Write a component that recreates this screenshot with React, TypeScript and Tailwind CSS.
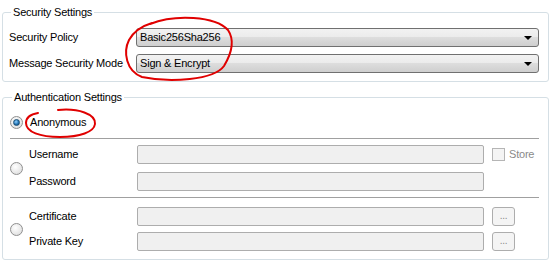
import React from "react";

const font = { fontFamily: '"Liberation Sans", Arial, sans-serif' };

function Combo({ value }: { value: string }) {
  return (
    <div className="relative flex h-[19px] w-[403px] items-center rounded-[3px] border border-[#707070] bg-[linear-gradient(to_bottom,#f2f2f2_0%,#ebebeb_50%,#dddddd_50%,#cfcfcf_100%)] pl-[3px] text-[11px] text-black">
      <span>{value}</span>
      <span className="ml-auto mr-[6px] h-0 w-0 border-x-[4px] border-t-[4px] border-x-transparent border-t-black" />
    </div>
  );
}

function Field() {
  return <div className="h-[19px] w-[347px] rounded-[2px] border border-[#adadad] bg-[#f0f0f0]" />;
}

function Radio({ checked }: { checked?: boolean }) {
  return (
    <span className="flex h-[13px] w-[13px] items-center justify-center rounded-full border border-[#8f8f8f] bg-[radial-gradient(circle_at_40%_35%,#ffffff,#d8d8d8)]">
      {checked && (
        <span className="h-[7px] w-[7px] rounded-full border border-[#1b4e73] bg-[radial-gradient(circle_at_40%_35%,#8fd0ff,#1e6fb0_60%,#12406b)]" />
      )}
    </span>
  );
}

function Dots() {
  return (
    <div className="flex h-[19px] w-[23px] items-center justify-center rounded-[3px] border border-[#adadad] bg-[#f4f4f4] pb-[2px] text-[10px] leading-none text-[#8a8a8a]">
      ...
    </div>
  );
}

export default function App() {
  return (
    <div className="relative h-[267px] w-[553px] overflow-hidden bg-white pt-[5px] tracking-[-0.2px] text-black" style={font}>
      {/* Security Settings */}
      <fieldset className="ml-[2px] w-[547px] rounded-[3px] border border-[#d5dfe5] pb-[8px] pl-[6px]">
        <legend className="ml-[2px] px-[2px] text-[11px] leading-[14px]">Security Settings</legend>
        <div className="mt-[9px] flex flex-col gap-[7px]">
          <div className="flex items-center">
            <span className="w-[127px] text-[11px]">Security Policy</span>
            <Combo value="Basic256Sha256" />
          </div>
          <div className="flex items-center">
            <span className="w-[127px] text-[11px]">Message Security Mode</span>
            <Combo value="Sign & Encrypt" />
          </div>
        </div>
      </fieldset>

      {/* Authentication Settings */}
      <fieldset className="ml-[2px] mt-[8px] w-[547px] rounded-[3px] border border-[#d5dfe5] pb-[8px] pl-[7px] text-[11px]">
        <legend className="ml-[2px] px-[2px] text-[11px] leading-[14px]">Authentication Settings</legend>
        <div className="mt-[10px] flex h-[16px] items-center">
          <Radio checked />
          <span className="ml-[7px]">Anonymous</span>
        </div>
        <div className="mt-[8px] h-px w-[529px] bg-[#a0a0a0]" />

        <div className="mt-[6px] flex items-center">
          <Radio />
          <div className="ml-[6px] flex flex-col gap-[8px]">
            <div className="flex items-center">
              <span className="w-[108px]">Username</span>
              <Field />
              <span className="ml-[8px] h-[13px] w-[13px] border border-[#b5b5b5] bg-[#f4f4f4]" />
              <span className="ml-[4px] text-[#8a8a8a]">Store</span>
            </div>
            <div className="flex items-center">
              <span className="w-[108px]">Password</span>
              <Field />
            </div>
          </div>
        </div>
        <div className="mt-[6px] h-px w-[529px] bg-[#a0a0a0]" />

        <div className="mt-[9px] flex items-center">
          <Radio />
          <div className="ml-[6px] flex flex-col gap-[6px]">
            <div className="flex items-center">
              <span className="w-[108px]">Certificate</span>
              <Field />
              <span className="ml-[8px]">
                <Dots />
              </span>
            </div>
            <div className="flex items-center">
              <span className="w-[108px]">Private Key</span>
              <Field />
              <span className="ml-[8px]">
                <Dots />
              </span>
            </div>
          </div>
        </div>
      </fieldset>

      {/* red hand-drawn annotations */}
      <svg className="pointer-events-none absolute left-0 top-0" width="553" height="267" viewBox="0 0 553 267">
        <path
          d="M150 24 C175 14 215 16 228 30 C236 42 230 56 224 66 C214 80 170 83 142 77 C126 71 123 52 129 40 C134 31 142 26 152 23"
          fill="none"
          stroke="#e00000"
          strokeWidth="2"
          strokeLinecap="round"
        />
        <path
          d="M58 110 C78 108 96 114 95 124 C94 132 80 137 60 137 C40 137 26 132 26 123 C26 116 32 114 38 113"
          fill="none"
          stroke="#e00000"
          strokeWidth="2"
          strokeLinecap="round"
        />
      </svg>
    </div>
  );
}
